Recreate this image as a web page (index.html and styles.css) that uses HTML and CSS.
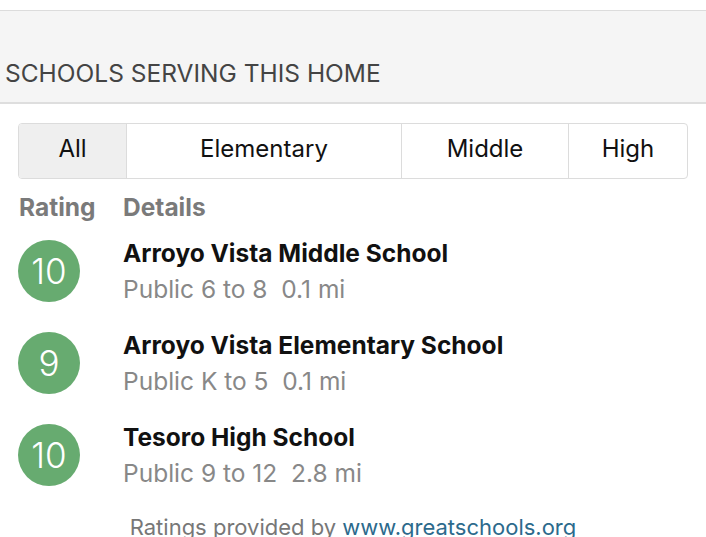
FILE: index.html
```html
<!DOCTYPE html>
<html>
    <head>
        <meta charset="UTF-8">
        <title>Schools</title>
        <link rel="stylesheet" href="styles.css">
    </head>
    <body>
        <div class="topbar"></div>
        <div class="section-head">
            <h2>SCHOOLS SERVING THIS HOME</h2>
        </div>
        <ul class="tabs">
            <li class="tab-all active">All</li>
            <li class="tab-elem">Elementary</li>
            <li class="tab-mid">Middle</li>
            <li class="tab-high">High</li>
        </ul>
        <div class="cols">
            <span class="col-rating">Rating</span>
            <span>Details</span>
        </div>
        <div class="list">
            <div class="school">
                <div class="badge">10</div>
                <div class="info">
                    <p class="name">Arroyo Vista Middle School</p>
                    <p class="meta">Public 6 to 8 &nbsp;0.1 mi</p>
                </div>
            </div>
            <div class="school">
                <div class="badge">9</div>
                <div class="info">
                    <p class="name">Arroyo Vista Elementary School</p>
                    <p class="meta">Public K to 5 &nbsp;0.1 mi</p>
                </div>
            </div>
            <div class="school">
                <div class="badge">10</div>
                <div class="info">
                    <p class="name">Tesoro High School</p>
                    <p class="meta">Public 9 to 12 &nbsp;2.8 mi</p>
                </div>
            </div>
        </div>
        <p class="credit">Ratings provided by <a href="#">www.greatschools.org</a></p>
    </body>
</html>
```

FILE: styles.css
```css
*{
    padding:0;
    margin:0;
}
ul,li{
    list-style:none;
}
body{
    font-family: Inter, "Open Sans", sans-serif;
    background: #fff;
    color: #111;
}
.topbar{
    height: 10px;
    border-bottom: 1px solid #dcdcdc;
}
.section-head{
    height: 91px;
    background: #f5f5f5;
    border-bottom: 2px solid #dedede;
    display: flex;
    align-items: flex-end;
    padding-left: 5px;
}
.section-head h2{
    font-size: 24.5px;
    font-weight: 400;
    color: #444;
    line-height: 30px;
    margin-bottom: 14px;
}
.tabs{
    display: flex;
    margin: 19px 18px 0;
    height: 54px;
    border: 1px solid #dcdcdc;
    border-radius: 4px;
    overflow: hidden;
}
.tabs li{
    display: flex;
    align-items: center;
    justify-content: center;
    padding-bottom: 5px;
    font-size: 24px;
    color: #111;
    border-left: 1px solid #dcdcdc;
}
.tabs li:first-child{
    border-left: none;
}
.tabs .active{
    background: #efefef;
}
.tab-all{ width: 107px; }
.tab-elem{ width: 274px; }
.tab-mid{ width: 166px; }
.tab-high{ flex: 1; }
.cols{
    display: flex;
    margin: 14px 0 0 19px;
    font-size: 24.5px;
    font-weight: 700;
    color: #7a7a7a;
    line-height: 28px;
}
.col-rating{
    width: 104px;
}
.list{
    display: flex;
    flex-direction: column;
    gap: 20px;
    margin: 14px 0 0 18px;
}
.school{
    display: flex;
    align-items: center;
    height: 72px;
}
.badge{
    width: 62px;
    height: 62px;
    border-radius: 50%;
    background: #67ab70;
    color: #fff;
    font-size: 35px;
    font-weight: 300;
    display: flex;
    align-items: center;
    justify-content: center;
    margin-right: 43px;
}
.name{
    font-size: 24.5px;
    font-weight: 700;
    color: #111;
    line-height: 36px;
}
.meta{
    font-size: 24.5px;
    color: #888;
    line-height: 36px;
}
.credit{
    text-align: center;
    font-size: 22px;
    line-height: 26px;
    color: #777;
    margin-top: 23px;
}
.credit a{
    color: #2c6a8c;
    text-decoration: none;
}
```
